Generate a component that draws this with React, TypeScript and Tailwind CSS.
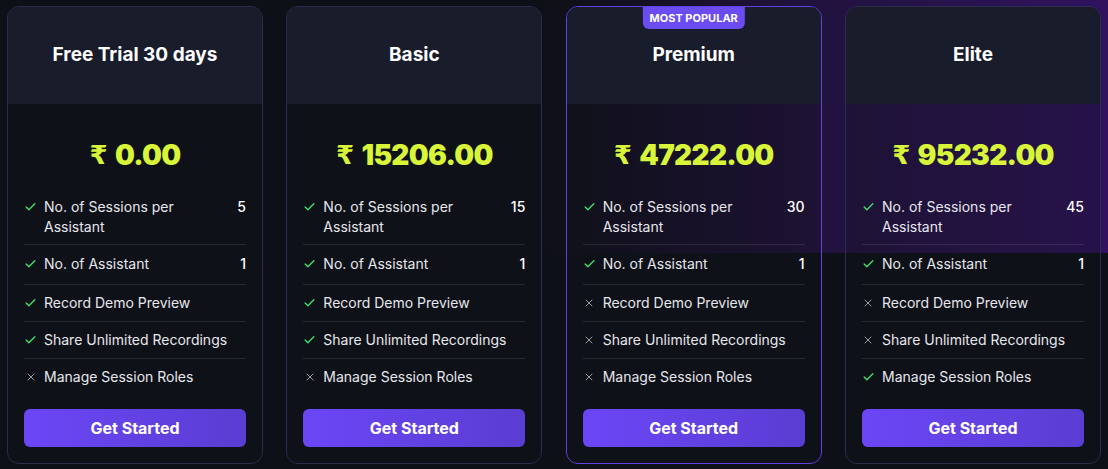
import { Check, X } from 'lucide-react';

type Feature = { label: string; value?: string; included: boolean };
type Plan = { name: string; price: string; popular?: boolean; features: Feature[] };

const feats = (sessions: string, flags: [boolean, boolean, boolean]): Feature[] => [
  { label: 'No. of Sessions per Assistant', value: sessions, included: true },
  { label: 'No. of Assistant', value: '1', included: true },
  { label: 'Record Demo Preview', included: flags[0] },
  { label: 'Share Unlimited Recordings', included: flags[1] },
  { label: 'Manage Session Roles', included: flags[2] },
];

const plans: Plan[] = [
  { name: 'Free Trial 30 days', price: '0.00', features: feats('5', [true, true, false]) },
  { name: 'Basic', price: '15206.00', features: feats('15', [true, true, false]) },
  { name: 'Premium', price: '47222.00', popular: true, features: feats('30', [false, false, false]) },
  { name: 'Elite', price: '95232.00', features: feats('45', [false, false, true]) },
];

function PlanCard({ plan }: { plan: Plan }) {
  return (
    <div
      className={`relative flex h-[458px] flex-col overflow-hidden rounded-xl border ${
        plan.popular ? 'border-[#5f42e0]' : 'border-[#2b2e4a]'
      }`}
    >
      {plan.popular && (
        <div className="absolute left-1/2 top-0 -translate-x-1/2 rounded-b-md bg-[#6a4cf0] px-[7px] py-[4px] text-[11px] font-bold leading-[14px] text-white">
          MOST POPULAR
        </div>
      )}
      <div className="flex h-[97px] shrink-0 items-center justify-center bg-[#181c2b]">
        <h3 className="text-[19px] font-bold text-white">{plan.name}</h3>
      </div>

      <div className="flex flex-1 flex-col bg-[#14151d]/30 px-4 pb-4 pt-[33px]">
        <div className="flex h-9 items-center justify-center gap-2 text-[28px] font-black tracking-tight text-[#d8f53a]">
          <span className="font-['DejaVu_Sans',sans-serif] text-[26px] font-bold">₹</span>
          <span>{plan.price}</span>
        </div>

        <ul className="mt-4">
          {plan.features.map((f, i) => (
            <li
              key={f.label}
              className={`flex items-start gap-[7px] border-white/10 text-[14px] leading-5 text-[#e6e7ec] ${
                i < plan.features.length - 1 ? 'border-b' : ''
              } ${i === 0 ? 'pb-[7px] pt-2' : f.value ? 'pb-[10px] pt-[9px]' : 'py-2'}`}
            >
              <span className="flex h-5 w-[13px] shrink-0 items-center justify-center">
                {f.included ? (
                  <Check className="h-[14px] w-[14px] text-[#3fe06a]" strokeWidth={2.5} />
                ) : (
                  <X className="h-3 w-3 text-[#9a9ca6]" strokeWidth={2} />
                )}
              </span>
              <span className={f.value ? 'w-[130px]' : ''}>{f.label}</span>
              {f.value && <span className="ml-auto font-medium text-white">{f.value}</span>}
            </li>
          ))}
        </ul>

        <button className="mt-auto h-[38px] w-full rounded-md bg-gradient-to-r from-[#6b46f6] to-[#5a3dd2] text-[16px] font-bold text-white">
          Get Started
        </button>
      </div>
    </div>
  );
}

export default function App() {
  return (
    <div className="relative h-[469px] w-[1108px] overflow-hidden bg-[#0e1017] font-['Inter',sans-serif]">
      {/* purple glow behind right cards */}
      <div className="absolute right-0 top-0 h-[253px] w-[560px] bg-gradient-to-r from-transparent via-[#22123f] to-[#30125f]" />
      <div className="relative grid grid-cols-[repeat(4,256px)] gap-x-[23.33px] pl-[7px] pt-[6px]">
        {plans.map((p) => (
          <PlanCard key={p.name} plan={p} />
        ))}
      </div>
    </div>
  );
}
